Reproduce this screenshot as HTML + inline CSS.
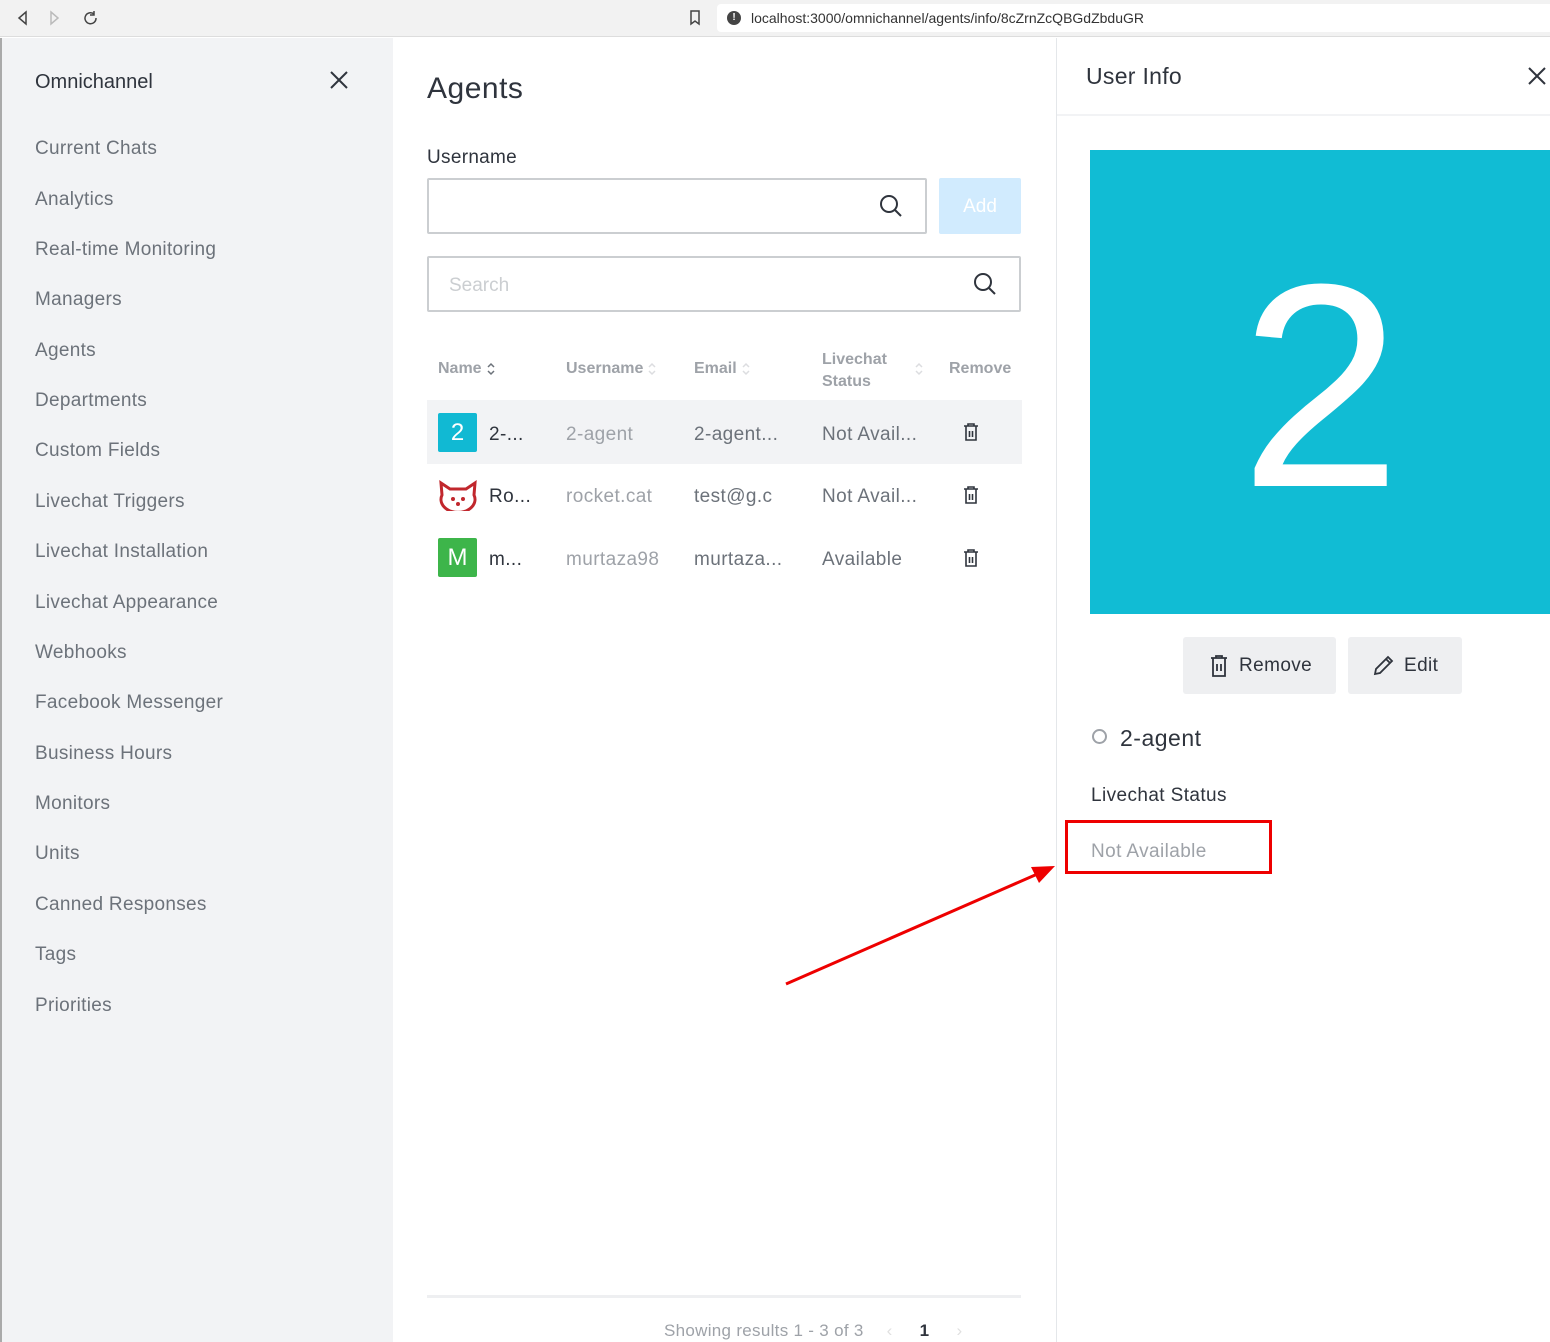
<!DOCTYPE html>
<html><head><style>
*{box-sizing:border-box;margin:0;padding:0}
body{width:1550px;height:1342px;overflow:hidden;font-family:"Liberation Sans",sans-serif;background:#fff;position:relative;color:#2f343d}
.bar{position:absolute;left:0;top:0;width:1550px;height:37px;background:#f2f2f2;border-bottom:1px solid #ddd}
.url{position:absolute;left:717px;top:4px;width:840px;height:28px;background:#fff;border-radius:4px;font-size:14px;color:#333;padding:6px 0 0 34px}
.side{position:absolute;left:0;top:38px;width:393px;height:1304px;background:#f2f3f5;border-left:2px solid #aaa}
.side .t{position:absolute;left:33px;top:33px;font-size:20px;color:#2f343d}
.side .i{position:absolute;left:33px;font-size:19px;color:#6c727a;letter-spacing:0.3px}
.abs{position:absolute}
.th{position:absolute;top:360px;font-size:16px;font-weight:bold;color:#9ea2a8}
.td{position:absolute;font-size:19px;color:#6c727a;letter-spacing:0.4px}
.g{color:#9ea2a8}
.av{position:absolute;left:438px;width:39px;height:39px;color:#fff;font-size:24px;text-align:center;line-height:39px;border-radius:2px}
.s{display:inline-block;vertical-align:middle;margin-left:4px}
</style></head><body>
<div class="bar">
<svg class="abs" style="left:14px;top:10px" width="90" height="16" fill="none" stroke="#444" stroke-width="1.5"><path d="M12 2L5 8l7 6z"/><path d="M37 2l7 6-7 6z" stroke="#bbb"/><path d="M80 4a5.5 5.5 0 1 0 2 4M80 1v4h-4"/></svg>
<svg class="abs" style="left:689px;top:10px" width="12" height="16" fill="none" stroke="#444" stroke-width="1.5"><path d="M2 1h8v13l-4-3-4 3z"/></svg>
<div class="url"><span style="position:absolute;left:10px;top:7px;width:14px;height:14px;border-radius:7px;background:#444;color:#fff;font-size:10px;text-align:center;line-height:14px;font-weight:bold">!</span>localhost:3000/omnichannel/agents/info/8cZrnZcQBGdZbduGR</div>
</div>
<div class="side">
<div class="t">Omnichannel</div>
<svg class="abs" style="left:328px;top:33px" width="18" height="18" stroke="#2f343d" stroke-width="2"><path d="M1 1l16 16M17 1L1 17"/></svg>
<div class="i" style="top:100px">Current Chats</div>
<div class="i" style="top:151px">Analytics</div>
<div class="i" style="top:201px">Real-time Monitoring</div>
<div class="i" style="top:251px">Managers</div>
<div class="i" style="top:302px">Agents</div>
<div class="i" style="top:352px">Departments</div>
<div class="i" style="top:402px">Custom Fields</div>
<div class="i" style="top:453px">Livechat Triggers</div>
<div class="i" style="top:503px">Livechat Installation</div>
<div class="i" style="top:554px">Livechat Appearance</div>
<div class="i" style="top:604px">Webhooks</div>
<div class="i" style="top:654px">Facebook Messenger</div>
<div class="i" style="top:705px">Business Hours</div>
<div class="i" style="top:755px">Monitors</div>
<div class="i" style="top:805px">Units</div>
<div class="i" style="top:856px">Canned Responses</div>
<div class="i" style="top:906px">Tags</div>
<div class="i" style="top:957px">Priorities</div>
</div>

<div class="abs" style="left:427px;top:72px;font-size:30px;letter-spacing:0.5px">Agents</div>
<div class="abs" style="left:427px;top:147px;font-size:19px;letter-spacing:0.3px">Username</div>
<div class="abs" style="left:427px;top:178px;width:500px;height:56px;border:2px solid #cbced1;border-radius:2px"></div>
<svg class="abs" style="left:879px;top:194px" width="24" height="24" fill="none" stroke="#2f343d" stroke-width="2"><circle cx="10" cy="10" r="8"/><path d="M16 16l6 6"/></svg>
<div class="abs" style="left:939px;top:178px;width:82px;height:56px;background:#d1ebfe;border-radius:2px;color:#fff;font-size:19px;text-align:center;line-height:58px">Add</div>
<div class="abs" style="left:427px;top:256px;width:594px;height:56px;border:2px solid #cbced1;border-radius:2px;padding:17px 20px;font-size:19px;color:#cbced1">Search</div>
<svg class="abs" style="left:973px;top:272px" width="24" height="24" fill="none" stroke="#2f343d" stroke-width="2"><circle cx="10" cy="10" r="8"/><path d="M16 16l6 6"/></svg>

<div class="th" style="left:438px">Name<svg class="s" width="10" height="14" fill="none" stroke="#6c727a" stroke-width="1.5"><path d="M2 5l3-3 3 3M2 9l3 3 3-3"/></svg></div>
<div class="th" style="left:566px">Username<svg class="s" width="10" height="14" fill="none" stroke="#dcdde0" stroke-width="1.5"><path d="M2 5l3-3 3 3M2 9l3 3 3-3"/></svg></div>
<div class="th" style="left:694px">Email<svg class="s" width="10" height="14" fill="none" stroke="#dcdde0" stroke-width="1.5"><path d="M2 5l3-3 3 3M2 9l3 3 3-3"/></svg></div>
<div class="th" style="left:822px;top:349px;line-height:22px">Livechat<br>Status</div>
<svg class="abs" style="left:914px;top:362px" width="10" height="14" fill="none" stroke="#dcdde0" stroke-width="1.5"><path d="M2 5l3-3 3 3M2 9l3 3 3-3"/></svg>
<div class="th" style="left:949px">Remove</div>
<div class="abs" style="left:427px;top:400px;width:595px;height:64px;background:#f2f3f5"></div>
<div class="av" style="top:413px;background:#11b9d3">2</div>
<div class="td" style="left:489px;top:424px;color:#2f343d">2-...</div>
<div class="td g" style="left:566px;top:424px">2-agent</div>
<div class="td" style="left:694px;top:424px">2-agent...</div>
<div class="td" style="left:822px;top:424px">Not Avail...</div>
<svg class="abs" style="left:438px;top:479px" width="40" height="32"><path d="M3 4l9 6h16l9-6-1 12a17 13 0 1 1-32 0z" fill="#fff" stroke="#c1272d" stroke-width="3"/><circle cx="15" cy="20" r="2" fill="#c1272d"/><circle cx="25" cy="20" r="2" fill="#c1272d"/><circle cx="20" cy="25" r="2" fill="#c1272d"/></svg>
<div class="td" style="left:489px;top:486px;color:#2f343d">Ro...</div>
<div class="td g" style="left:566px;top:486px">rocket.cat</div>
<div class="td" style="left:694px;top:486px">test@g.c</div>
<div class="td" style="left:822px;top:486px">Not Avail...</div>
<div class="av" style="top:538px;background:#3db54a">M</div>
<div class="td" style="left:489px;top:549px;color:#2f343d">m...</div>
<div class="td g" style="left:566px;top:549px">murtaza98</div>
<div class="td" style="left:694px;top:549px">murtaza...</div>
<div class="td" style="left:822px;top:549px">Available</div>
<svg class="abs" style="left:962px;top:423px" width="18" height="148" fill="none" stroke="#2f343d" stroke-width="1.6"><g><path d="M2 3h14M6 3V1h6v2M4 3v14h10V3M7.5 8v6M10.5 8v6"/></g><g transform="translate(0,63)"><path d="M2 3h14M6 3V1h6v2M4 3v14h10V3M7.5 8v6M10.5 8v6"/></g><g transform="translate(0,126)"><path d="M2 3h14M6 3V1h6v2M4 3v14h10V3M7.5 8v6M10.5 8v6"/></g></svg>

<div class="abs" style="left:427px;top:1295px;width:594px;height:3px;background:#eeeff1"></div>
<div class="abs" style="left:664px;top:1321px;font-size:17px;color:#9ea2a8;letter-spacing:0.3px">Showing results 1 - 3 of 3 <span style="margin-left:18px;color:#e0e0e0">‹</span> <span style="margin-left:22px;color:#2f343d;font-weight:bold">1</span> <span style="margin-left:22px;color:#e0e0e0">›</span></div>

<div class="abs" style="left:1056px;top:38px;width:1px;height:1304px;background:#e4e7ea"></div>
<div class="abs" style="left:1057px;top:114px;width:493px;height:2px;background:#f2f3f5"></div>
<div class="abs" style="left:1086px;top:63px;font-size:23px;letter-spacing:0.3px">User Info</div>
<svg class="abs" style="left:1528px;top:67px" width="18" height="18" stroke="#2f343d" stroke-width="2"><path d="M1 1l16 16M17 1L1 17"/></svg>
<div class="abs" style="left:1090px;top:150px;width:460px;height:464px;background:#11bcd4;color:#fff;font-size:290px;line-height:464px">
<span style="position:absolute;left:150px;top:4px">2</span></div>
<div class="abs" style="left:1183px;top:637px;width:153px;height:57px;background:#eeeff1;border-radius:3px;font-size:19px;padding:18px 0 0 56px;letter-spacing:0.4px">Remove</div>
<svg class="abs" style="left:1209px;top:654px" width="20" height="24" fill="none" stroke="#2f343d" stroke-width="1.8"><path d="M2 4h16M7 4V2h6v2M4 4v18h12V4M8 10v7M12 10v7"/></svg>
<div class="abs" style="left:1348px;top:637px;width:114px;height:57px;background:#eeeff1;border-radius:3px;font-size:19px;padding:18px 0 0 56px;letter-spacing:0.4px">Edit</div>
<svg class="abs" style="left:1373px;top:654px" width="22" height="22" fill="none" stroke="#2f343d" stroke-width="1.8"><path d="M2 20l1-5L15 3l4 4L7 19z M13 5l4 4"/></svg>
<div class="abs" style="left:1092px;top:729px;width:15px;height:15px;border:2.5px solid #9ea2a8;border-radius:50%"></div>
<div class="abs" style="left:1120px;top:725px;font-size:23px;letter-spacing:0.5px">2-agent</div>
<div class="abs" style="left:1091px;top:785px;font-size:19px;letter-spacing:0.4px">Livechat Status</div>
<div class="abs" style="left:1065px;top:820px;width:207px;height:54px;border:3px solid #e00"></div>
<div class="abs" style="left:1091px;top:841px;font-size:19px;color:#9ea2a8;letter-spacing:0.4px">Not Available</div>
<svg class="abs" style="left:780px;top:860px" width="280" height="130"><path d="M6 124L262 12" stroke="#e00" stroke-width="3"/><path d="M275 6l-24 1 8 16z" fill="#e00"/></svg>
</body></html>
